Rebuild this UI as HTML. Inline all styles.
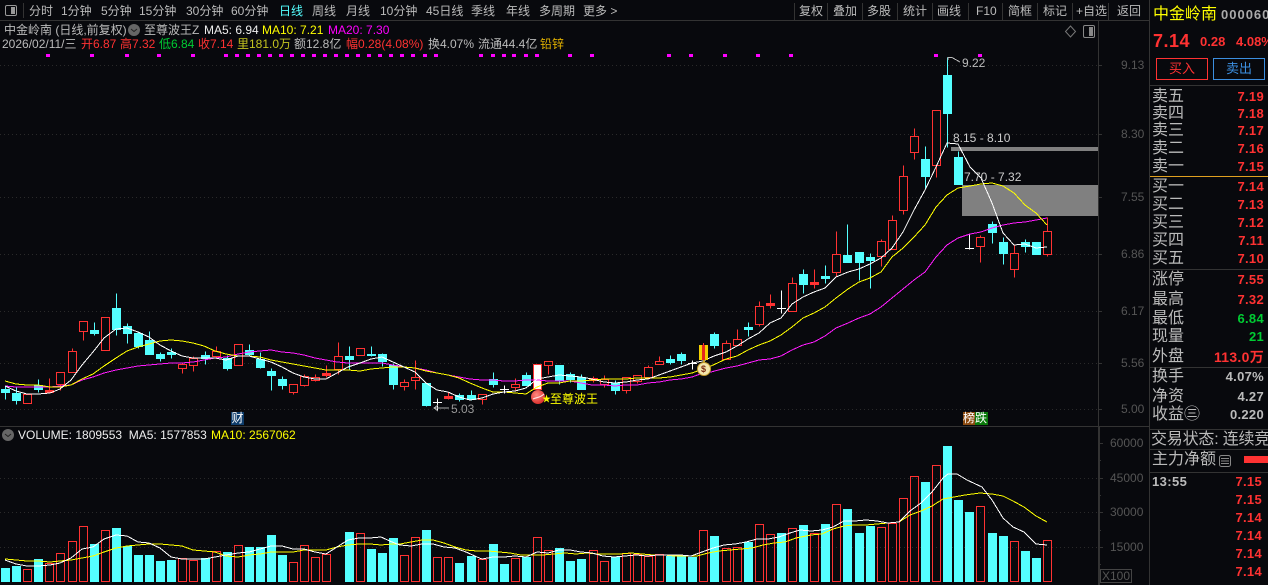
<!DOCTYPE html>
<html lang="zh"><head><meta charset="utf-8"><title>中金岭南</title>
<style>
html,body{margin:0;padding:0;background:#08090d}
#r{position:relative;width:1268px;height:585px;overflow:hidden;background:#08090d;font:12px/14px "Liberation Sans","WenQuanYi Zen Hei","Noto Sans CJK SC",sans-serif;color:#bbb}
#r span,#r b{position:absolute;white-space:nowrap}
svg{position:absolute;left:0;top:0}
.top span{top:4px;color:#bbb;font-size:12px}
.l{left:1152px;font-size:16px;line-height:18px;color:#bbb}
.v{right:4px;font-weight:bold;font-size:13px;line-height:16px;letter-spacing:.3px;color:#ff3232}
.g{color:#0c3 !important}
.a{left:1121px;color:#555;font-size:12px}
.b{left:1110px;color:#555;font-size:12px}
.red{color:#ff3232}.y{color:#ff0}.m{color:#f0f}.w{color:#eee}
</style></head><body><div id="r">
<svg width="1268" height="585" viewBox="0 0 1268 585" shape-rendering="crispEdges">
<defs><radialGradient id="ball" cx=".4" cy=".35" r=".7"><stop offset="0" stop-color="#ff8a80"/><stop offset="1" stop-color="#d82a28"/></radialGradient></defs>
<g fill="none" stroke="#333">
<path d="M0 20.5H1149M1149.5 0V585M1098.5 20V585M0 426.5H1149M1099.5 427V585M23.5 3V18M794.5 3V20M827.5 3V20M862.5 3V20M897.5 3V20M932.5 3V20M968.5 3V20M1002.5 3V20M1037.5 3V20M1072.5 3V20M1108.5 3V20M1150 85.5H1268M1150 269.5H1268M1150 367.5H1268M1150 429.5H1268M1150 449.5H1268M1150 472.5H1268"/>
<path d="M1098 65.5h4M1098 134.5h4M1098 197.5h4M1098 254.5h4M1098 311.5h4M1098 363.5h4M1098 409.5h4M1099 443.5h4M1099 478.5h4M1099 512.5h4M1099 547.5h4M1099 460.5h2M1099 495.5h2M1099 530.5h2M1099 564.5h2"/>
<path d="M1100.5 569.5h31v13h-31z" stroke="#444"/>
</g>
<path d="M1150 176.5H1268" stroke="#e0a020" fill="none"/>
<path d="M0 65.5H1098M0 134.5H1098M0 197.5H1098M0 254.5H1098M0 311.5H1098M0 363.5H1098M0 409.5H1098M0 478.5H1098M0 512.5H1098M0 547.5H1098" stroke="#2a2a2a" stroke-dasharray="1 3" fill="none"/>
<!-- zones -->
<rect x="951" y="147" width="147" height="4" fill="#808080"/>
<rect x="962" y="185" width="136" height="31" fill="#808080"/>
<!-- signal dots -->
<path fill="#f0f" d="M46 54h4v3h-4zM90 54h4v3h-4zM125 54h4v3h-4zM157 54h4v3h-4zM191 54h4v3h-4zM224 54h4v3h-4zM235 54h4v3h-4zM246 54h4v3h-4zM257 54h4v3h-4zM268 54h4v3h-4zM279 54h4v3h-4zM290 54h4v3h-4zM301 54h4v3h-4zM312 54h4v3h-4zM323 54h4v3h-4zM334 54h4v3h-4zM345 54h4v3h-4zM356 54h4v3h-4zM367 54h4v3h-4zM378 54h4v3h-4zM389 54h4v3h-4zM400 54h4v3h-4zM411 54h4v3h-4zM423 54h4v3h-4zM434 54h4v3h-4zM479 54h4v3h-4zM491 54h4v3h-4zM502 54h4v3h-4zM512 54h4v3h-4zM524 54h4v3h-4zM535 54h4v3h-4zM568 54h4v3h-4zM590 54h4v3h-4zM667 54h4v3h-4zM689 54h4v3h-4zM723 54h4v3h-4zM756 54h4v3h-4zM789 54h4v3h-4zM934 54h4v3h-4zM978 54h4v3h-4z"/>
<g transform="translate(0,.5)">
<!-- cyan candles -->
<path fill="#54ffff" stroke="#54ffff" d="M5.5 385V399M1.5 389h8V392h-8zM16.5 387V404M12.5 393h8V400h-8zM38.5 379V392M34.5 385h8V389h-8zM94.5 322V335M90.5 330h8V333h-8zM116.5 293V335M112.5 308h8V329h-8zM127.5 323V343M123.5 326h8V333h-8zM138.5 331V348M134.5 333h8V346h-8zM149.5 331V354M145.5 340h8V354h-8zM160.5 352V361M156.5 354h8V358h-8zM171.5 348V358M167.5 352h8V354h-8zM205.5 351V364M201.5 355h8V358h-8zM227.5 355V370M223.5 358h8V368h-8zM249.5 344V355M245.5 350h8V354h-8zM260.5 352V368M256.5 359h8V367h-8zM271.5 368V390M267.5 371h8V375h-8zM282.5 376V389M278.5 379h8V385h-8zM349.5 346V369M345.5 356h8V359h-8zM371.5 346V356M367.5 354h8V355h-8zM382.5 353V366M378.5 354h8V361h-8zM393.5 363V389M389.5 365h8V384h-8zM426.5 383V406M422.5 383h8V405h-8zM459.5 393V401M455.5 395h8V399h-8zM471.5 390V400M467.5 395h8V399h-8zM493.5 372V387M489.5 379h8V384h-8zM526.5 372V385M522.5 375h8V385h-8zM559.5 365V384M555.5 365h8V380h-8zM570.5 372V382M566.5 374h8V379h-8zM581.5 374V389M577.5 377h8V389h-8zM615.5 380V394M611.5 383h8V390h-8zM670.5 355V364M666.5 359h8V362h-8zM681.5 352V364M677.5 354h8V360h-8zM714.5 332V348M710.5 334h8V345h-8zM748.5 322V336M744.5 327h8V329h-8zM803.5 269V293M799.5 274h8V284h-8zM825.5 265V283M821.5 276h8V278h-8zM847.5 224V262M843.5 255h8V262h-8zM859.5 252V280M855.5 252h8V262h-8zM870.5 253V288M866.5 257h8V260h-8zM925.5 146V188M921.5 159h8V176h-8zM947.5 57V147M943.5 75h8V113h-8zM958.5 151V184M954.5 157h8V184h-8zM992.5 221V243M988.5 224h8V232h-8zM1003.5 237V264M999.5 242h8V253h-8zM1025.5 239V252M1021.5 242h8V246h-8zM1036.5 242V254M1032.5 242h8V254h-8z"/>
<!-- red wicks -->
<path fill="none" stroke="#ff3232" d="M49.5 378V393M60.5 372V390M72.5 348V372M83.5 321V340M182.5 362V373M193.5 356V371M216.5 346V357M293.5 384V394M304.5 374V386M315.5 374V381M326.5 365V377M338.5 342V374M404.5 379V390M415.5 360V389M448.5 392V399M482.5 394V404M515.5 378V390M548.5 361V374M593.5 376V382M604.5 375V387M626.5 377V393M637.5 375V383M648.5 365V379M659.5 356V364M726.5 340V359M737.5 329V345M759.5 301V326M770.5 294V308M792.5 277V311M814.5 269V288M836.5 231V276M881.5 239V266M892.5 215V249M903.5 165V214M914.5 128V159M936.5 110V177M980.5 235V262M1014.5 245V277M1047.5 217V256"/>
<!-- red bodies -->
<path fill="#08090d" stroke="#ff3232" d="M23.5 394h8V403h-8zM56.5 372h8V384h-8zM68.5 351h8V372h-8zM79.5 321h8V331h-8zM101.5 317h8V350h-8zM178.5 364h8V368h-8zM189.5 358h8V365h-8zM212.5 351h8V356h-8zM234.5 344h8V365h-8zM289.5 384h8V392h-8zM300.5 376h8V385h-8zM311.5 377h8V380h-8zM334.5 356h8V369h-8zM356.5 348h8V355h-8zM400.5 382h8V386h-8zM411.5 377h8V380h-8zM478.5 394h8V399h-8zM511.5 384h8V387h-8zM544.5 361h8V365h-8zM589.5 378h8V380h-8zM600.5 379h8V384h-8zM622.5 377h8V390h-8zM633.5 375h8V381h-8zM644.5 367h8V377h-8zM655.5 361h8V364h-8zM722.5 343h8V359h-8zM733.5 339h8V345h-8zM755.5 306h8V324h-8zM788.5 283h8V311h-8zM832.5 254h8V272h-8zM877.5 241h8V256h-8zM888.5 220h8V249h-8zM899.5 176h8V210h-8zM910.5 136h8V152h-8zM932.5 110h8V165h-8zM976.5 237h8V246h-8zM1010.5 253h8V269h-8zM1043.5 231h8V254h-8z"/>
<path fill="#ff3232" stroke="#ff3232" d="M45.5 390h8V392h-8zM322.5 373h8V375h-8zM444.5 396h8V398h-8zM766.5 303h8V305h-8zM810.5 282h8V284h-8z"/>
<!-- white doji -->
<path fill="none" stroke="#fff" d="M437.5 398V410M433 402h9M504.5 385V393M500 389h9M692.5 360V369M688 363h9M781.5 290V313M777 308h9M969.5 233V249M965 248h9"/>
<rect x="533.5" y="364" width="8" height="25" fill="#fff" stroke="#ff3232"/>
<!-- volume cyan -->
<path fill="#54ffff" stroke="#54ffff" d="M1.5 568h8V581h-8zM12.5 566h8V581h-8zM34.5 559h8V581h-8zM90.5 544h8V581h-8zM112.5 528h8V581h-8zM123.5 546h8V581h-8zM134.5 555h8V581h-8zM145.5 555h8V581h-8zM156.5 561h8V581h-8zM167.5 560h8V581h-8zM201.5 558h8V581h-8zM223.5 552h8V581h-8zM245.5 547h8V581h-8zM256.5 547h8V581h-8zM267.5 535h8V581h-8zM278.5 555h8V581h-8zM345.5 532h8V581h-8zM367.5 549h8V581h-8zM378.5 553h8V581h-8zM389.5 538h8V581h-8zM422.5 530h8V581h-8zM455.5 563h8V581h-8zM467.5 556h8V581h-8zM489.5 544h8V581h-8zM500.5 564h8V581h-8zM522.5 557h8V581h-8zM555.5 548h8V581h-8zM566.5 561h8V581h-8zM577.5 559h8V581h-8zM611.5 557h8V581h-8zM666.5 556h8V581h-8zM677.5 556h8V581h-8zM688.5 557h8V581h-8zM710.5 536h8V581h-8zM744.5 542h8V581h-8zM777.5 533h8V581h-8zM799.5 525h8V581h-8zM821.5 524h8V581h-8zM843.5 509h8V581h-8zM855.5 533h8V581h-8zM866.5 526h8V581h-8zM921.5 482h8V581h-8zM943.5 446h8V581h-8zM954.5 500h8V581h-8zM965.5 512h8V581h-8zM988.5 533h8V581h-8zM999.5 536h8V581h-8zM1021.5 551h8V581h-8zM1032.5 558h8V581h-8z"/>
<!-- volume red -->
<path fill="none" stroke="#ff3232" d="M23.5 569h8V581h-8zM45.5 563h8V581h-8zM56.5 553h8V581h-8zM68.5 541h8V581h-8zM79.5 526h8V581h-8zM101.5 530h8V581h-8zM178.5 558h8V581h-8zM189.5 560h8V581h-8zM212.5 551h8V581h-8zM234.5 545h8V581h-8zM289.5 562h8V581h-8zM300.5 545h8V581h-8zM311.5 557h8V581h-8zM322.5 554h8V581h-8zM356.5 533h8V581h-8zM400.5 555h8V581h-8zM411.5 537h8V581h-8zM433.5 557h8V581h-8zM444.5 557h8V581h-8zM478.5 559h8V581h-8zM511.5 558h8V581h-8zM533.5 537h8V581h-8zM544.5 550h8V581h-8zM589.5 550h8V581h-8zM600.5 561h8V581h-8zM622.5 553h8V581h-8zM633.5 554h8V581h-8zM644.5 556h8V581h-8zM655.5 554h8V581h-8zM699.5 530h8V581h-8zM722.5 548h8V581h-8zM733.5 547h8V581h-8zM755.5 524h8V581h-8zM766.5 534h8V581h-8zM788.5 528h8V581h-8zM810.5 533h8V581h-8zM832.5 504h8V581h-8zM877.5 527h8V581h-8zM888.5 523h8V581h-8zM899.5 498h8V581h-8zM910.5 476h8V581h-8zM932.5 465h8V581h-8zM976.5 506h8V581h-8zM1010.5 541h8V581h-8zM1043.5 540h8V581h-8z"/>
</g>
<g fill="none">
<!-- magenta MA20 -->
<polyline stroke="#ff1cff" points="5,386 16,387 27,387 38,387 50,387 60,386 71,385 82,380 93,377 104,373 116,370 127,368 138,366 149,365 160,364 171,363 182,363 193,362 204,360 215,358 226,357 238,354 249,352 260,351 271,350 282,352 293,353 304,355 315,358 326,360 337,362 348,363 360,363 371,363 382,363 393,365 404,367 415,368 426,370 437,373 448,375 459,377 470,379 482,380 493,380 504,381 515,381 526,380 537,380 548,381 559,381 570,381 581,383 592,385 604,385 615,386 626,385 637,385 648,383 659,382 670,380 681,379 692,377 703,373 711,372 726,368 737,366 748,363 759,360 770,359 781,356 792,350 803,345 814,342 825,336 836,328 848,323 859,318 870,314 881,307 892,298 903,289 914,280 925,272 936,257 947,245 958,238 970,234 981,232 992,228 1003,225 1014,223 1025,222 1036,220 1047,218"/>
<!-- yellow MA10 -->
<polyline stroke="#ff0" points="5,381 16,384 27,385 38,385 50,387 60,387 71,385 82,379 93,374 104,366 116,358 127,351 138,347 149,344 160,341 171,340 182,341 193,343 204,346 215,351 226,354 238,356 249,356 260,357 271,360 282,362 293,364 304,366 315,368 326,370 337,370 348,370 360,371 371,369 382,368 393,367 404,367 415,368 426,371 437,373 448,375 459,378 470,383 482,388 493,392 504,392 515,393 526,394 537,387 548,383 559,383 570,381 581,381 592,380 604,379 615,379 626,379 637,378 648,378 659,378 670,377 681,375 692,373 703,369 711,366 726,359 737,356 748,350 759,345 770,341 781,335 792,327 803,318 814,313 825,307 836,298 848,289 859,282 870,278 881,272 892,257 903,248 914,237 925,225 936,207 947,195 958,188 970,186 981,184 992,183 1003,186 1014,193 1025,205 1036,213 1047,225"/>
<!-- white MA5 -->
<polyline stroke="#fff" points="5,386 16,391 27,394 38,394 50,393 60,389 71,380 82,365 93,352 104,338 116,329 127,328 138,332 149,337 160,345 171,351 182,356 193,358 204,358 215,358 226,360 238,356 249,356 260,359 271,362 282,367 293,373 304,377 315,379 326,379 337,373 348,367 360,363 371,359 382,357 393,362 404,367 415,372 426,383 437,390 448,392 459,397 470,400 482,398 493,394 504,392 515,391 526,388 537,379 548,377 559,375 570,376 581,377 592,379 604,382 615,383 626,382 637,380 648,379 659,375 670,371 681,367 692,363 703,361 714,356 726,352 737,346 748,339 759,333 770,323 781,318 792,304 803,297 814,292 825,288 836,277 848,272 859,269 870,264 881,258 892,248 903,232 914,210 925,190 936,167 947,143 958,144 970,167 981,178 992,203 1003,233 1014,245 1025,244 1036,248 1047,247"/>
<!-- volume MA10 -->
<polyline stroke="#ff0" points="5,559 16,560 27,561 38,561 50,562 60,561 71,560 82,558 93,556 104,552 116,548 127,546 138,545 149,544 160,544 171,545 182,546 193,550 204,551 215,552 226,556 238,557 249,555 260,554 271,552 282,552 293,552 304,550 315,550 326,550 337,547 348,545 359,544 370,544 381,545 392,544 400,544 411,542 422,540 433,540 444,543 455,547 466,550 477,551 488,551 499,552 510,553 521,555 532,555 543,555 554,554 565,553 576,554 587,553 598,554 609,554 620,554 631,553 642,554 653,555 664,555 675,556 686,556 697,556 708,553 719,551 730,550 741,549 752,548 763,545 774,543 785,542 796,538 811,535 822,534 833,529 844,526 855,525 866,525 877,524 888,523 899,522 910,515 921,511 932,506 943,499 954,497 965,495 980,493 992,494 1003,496 1013,501 1024,507 1036,516 1047,522"/>
<!-- volume MA5 -->
<polyline stroke="#fff" points="5,560 16,564 27,566 38,566 50,565 60,563 71,558 82,549 93,547 104,539 116,535 127,536 138,542 149,543 160,548 171,557 182,559 193,559 204,559 215,557 226,555 238,553 249,552 260,549 271,546 282,546 293,549 304,549 315,552 326,554 337,547 348,540 359,538 370,538 381,537 392,542 400,545 411,546 422,544 433,544 444,547 455,548 466,552 477,557 482,559 493,557 504,557 515,556 526,557 537,552 548,553 559,550 570,550 581,552 592,553 603,556 614,557 625,556 636,555 647,556 658,555 669,555 680,555 691,556 702,552 713,548 724,545 735,544 746,542 757,539 768,539 779,537 790,533 800,530 811,531 822,530 833,527 844,521 855,521 866,520 877,521 888,523 899,522 910,511 921,503 932,492 943,478 948,474 957,474 967,480 982,487 992,500 1003,518 1013,527 1024,532 1036,544 1047,545"/>
<!-- price notes -->
<path stroke="#bbb" d="M948 60V57.5h4M952 57.5L960 62"/>
<path stroke="#aaa" d="M438 405L434 408L438 411M434 408H449"/>
</g>
<!-- medal -->
<g>
<rect x="699" y="345" width="9" height="15" fill="#f4d000"/>
<rect x="702" y="345" width="3" height="15" fill="#e8261c"/>
<path d="M703.5 343V345" stroke="#ff3232"/>
<path d="M703 360h2v3h-2z" fill="#c9a52a"/>
<circle cx="704" cy="369" r="6.5" fill="#f3e5ab" stroke="#c49a2a" shape-rendering="auto"/>
<circle cx="538" cy="397" r="7" fill="url(#ball)" shape-rendering="auto"/>
<path d="M533 399C537 397 540 398 544 394" stroke="#ffe0e0" stroke-width="1.2" fill="none" shape-rendering="auto"/>
</g>
<!-- icons -->
<g fill="none" shape-rendering="auto">
<rect x="5.5" y="5.5" width="11" height="10" rx="1.5" stroke="#999"/>
<rect x="11" y="7" width="4" height="7" fill="#999"/>
<rect x="1083.5" y="25.5" width="11" height="12" rx="1.5" stroke="#888"/>
<rect x="1089" y="27" width="4" height="9" fill="#888"/>
<path d="M1070.5 26L1075.5 31.5L1070.5 37L1065.5 31.5Z" stroke="#777"/>
<circle cx="134" cy="30" r="6" fill="#666"/>
<path d="M131 29l3 2.5 3-2.5" stroke="#222"/>
<circle cx="8" cy="435" r="6" fill="#666"/>
<path d="M5 434l3 2.5 3-2.5" stroke="#222"/>
<rect x="1219.5" y="455.5" width="11" height="11" rx="2" stroke="#888"/>
<path d="M1221 458.5h8M1221 461h8M1221 463.5h8" stroke="#888"/>
</g>
<rect x="1156.5" y="58.5" width="51" height="21" fill="none" stroke="#ff3232"/>
<rect x="1213.5" y="58.5" width="51" height="21" fill="none" stroke="#3c8fe0"/>
<rect x="1244" y="456" width="24" height="7" fill="#ff3232"/>
</svg>

<div class="top">
<span style="left:29px">分时</span><span style="left:61px">1分钟</span><span style="left:101px">5分钟</span><span style="left:139px">15分钟</span><span style="left:186px">30分钟</span><span style="left:231px">60分钟</span><span style="left:279px;color:#54ffff">日线</span><span style="left:312px">周线</span><span style="left:346px">月线</span><span style="left:380px">10分钟</span><span style="left:426px">45日线</span><span style="left:471px">季线</span><span style="left:506px">年线</span><span style="left:539px">多周期</span><span style="left:583px">更多 &gt;</span>
<span style="left:799px">复权</span><span style="left:833px">叠加</span><span style="left:867px">多股</span><span style="left:903px">统计</span><span style="left:937px">画线</span><span style="left:976px">F10</span><span style="left:1008px">简框</span><span style="left:1043px">标记</span><span style="left:1076px">+自选</span><span style="left:1117px">返回</span>
</div>

<span style="left:4px;top:23px">中金岭南 (日线,前复权)</span><span style="left:144px;top:23px">至尊波王Z</span>
<span class="w" style="left:204px;top:23px">MA5: 6.94</span><span class="y" style="left:262px;top:23px">MA10: 7.21</span><span class="m" style="left:328px;top:23px">MA20: 7.30</span>

<span style="left:2px;top:37px">2026/02/11/三</span>
<span class="red" style="left:81px;top:37px">开6.87</span><span class="red" style="left:120px;top:37px">高7.32</span><span style="left:159px;top:37px;color:#0c3">低6.84</span><span class="red" style="left:198px;top:37px">收7.14</span><span style="left:237px;top:37px;color:#c4c420">里181.0万</span><span style="left:294px;top:37px">额12.8亿</span><span class="red" style="left:346px;top:37px">幅0.28(4.08%)</span><span style="left:428px;top:37px">换4.07%</span><span style="left:478px;top:37px">流通44.4亿</span><span style="left:540px;top:37px;color:#e0b000">铅锌</span>

<span style="left:962px;top:56px;color:#bbb">9.22</span>
<span style="left:953px;top:131px;color:#ccc">8.15 - 8.10</span>
<span style="left:964px;top:170px;color:#ccc">7.70 - 7.32</span>
<span style="left:451px;top:402px;color:#999">5.03</span>
<span class="y" style="left:542px;top:392px;font-size:9px">★</span>
<span class="y" style="left:550px;top:392px;font-size:12px">至尊波王</span>
<span style="left:231px;top:412px;width:13px;height:13px;background:#0e3d6b;color:#fff;text-align:center;line-height:13px">财</span>
<span style="left:963px;top:412px;width:12px;height:13px;background:#8a4a10;color:#fff;line-height:13px">榜</span>
<span style="left:975px;top:412px;width:13px;height:13px;background:#0a7a0a;color:#fff;line-height:13px">跌</span>
<span style="left:701px;top:364px;font-size:9px;line-height:10px;font-weight:bold;color:#7a2a10">$</span>

<span class="a" style="top:58px">9.13</span><span class="a" style="top:127px">8.30</span><span class="a" style="top:190px">7.55</span><span class="a" style="top:247px">6.86</span><span class="a" style="top:304px">6.17</span><span class="a" style="top:356px">5.56</span><span class="a" style="top:402px">5.00</span>
<span class="b" style="top:436px">60000</span><span class="b" style="top:471px">45000</span><span class="b" style="top:505px">30000</span><span class="b" style="top:540px">15000</span>
<span style="left:1102px;top:569px;color:#555">X100</span>

<span class="w" style="left:18px;top:428px">VOLUME: 1809553&nbsp;&nbsp;MA5: 1577853</span><span class="y" style="left:211px;top:428px">MA10: 2567062</span>

<span style="left:1153px;top:6px;font-size:16px;line-height:18px;color:#ff0">中金岭南</span>
<b style="left:1221px;top:8px;font-size:13px;letter-spacing:1px;color:#aaa">000060</b>
<b class="red" style="left:1153px;top:31px;font-size:18px;line-height:20px;letter-spacing:.5px">7.14</b>
<b class="red" style="left:1200px;top:35px;font-size:13px">0.28</b>
<b class="red" style="left:1236px;top:35px;font-size:13px">4.08%</b>
<span class="red" style="left:1169px;top:62px;font-size:13px">买入</span>
<span style="left:1226px;top:62px;font-size:13px;color:#3c8fe0">卖出</span>

<span class="l" style="top:88px">卖五</span><b class="v" style="top:89px">7.19</b>
<span class="l" style="top:105px">卖四</span><b class="v" style="top:106px">7.18</b>
<span class="l" style="top:122px">卖三</span><b class="v" style="top:123px">7.17</b>
<span class="l" style="top:140px">卖二</span><b class="v" style="top:141px">7.16</b>
<span class="l" style="top:158px">卖一</span><b class="v" style="top:159px">7.15</b>
<span class="l" style="top:178px">买一</span><b class="v" style="top:179px">7.14</b>
<span class="l" style="top:196px">买二</span><b class="v" style="top:197px">7.13</b>
<span class="l" style="top:214px">买三</span><b class="v" style="top:215px">7.12</b>
<span class="l" style="top:232px">买四</span><b class="v" style="top:233px">7.11</b>
<span class="l" style="top:250px">买五</span><b class="v" style="top:251px">7.10</b>
<span class="l" style="top:271px">涨停</span><b class="v" style="top:272px">7.55</b>
<span class="l" style="top:291px">最高</span><b class="v" style="top:292px">7.32</b>
<span class="l" style="top:310px">最低</span><b class="v g" style="top:311px">6.84</b>
<span class="l" style="top:328px">现量</span><b class="v g" style="top:329px">21</b>
<span class="l" style="top:348px">外盘</span><b class="v" style="top:349px;font-size:14px">113.0万</b>
<span class="l" style="top:368px">换手</span><b class="v" style="top:369px;color:#bbb">4.07%</b>
<span class="l" style="top:388px">净资</span><b class="v" style="top:389px;color:#bbb">4.27</b>
<span class="l" style="top:406px">收益㊂</span><b class="v" style="top:407px;color:#bbb">0.220</b>
<span class="l" style="top:431px;left:1151px;letter-spacing:-.2px">交易状态: 连续竞</span>
<span class="l" style="top:451px">主力净额</span>
<b style="left:1152px;top:475px;font-size:13px;color:#bbb;letter-spacing:.4px">13:55</b>
<b class="v" style="top:474px;right:6px">7.15</b><b class="v" style="top:492px;right:6px">7.15</b><b class="v" style="top:510px;right:6px">7.14</b><b class="v" style="top:528px;right:6px">7.14</b><b class="v" style="top:546px;right:6px">7.14</b><b class="v" style="top:564px;right:6px">7.14</b>
</div></body></html>
